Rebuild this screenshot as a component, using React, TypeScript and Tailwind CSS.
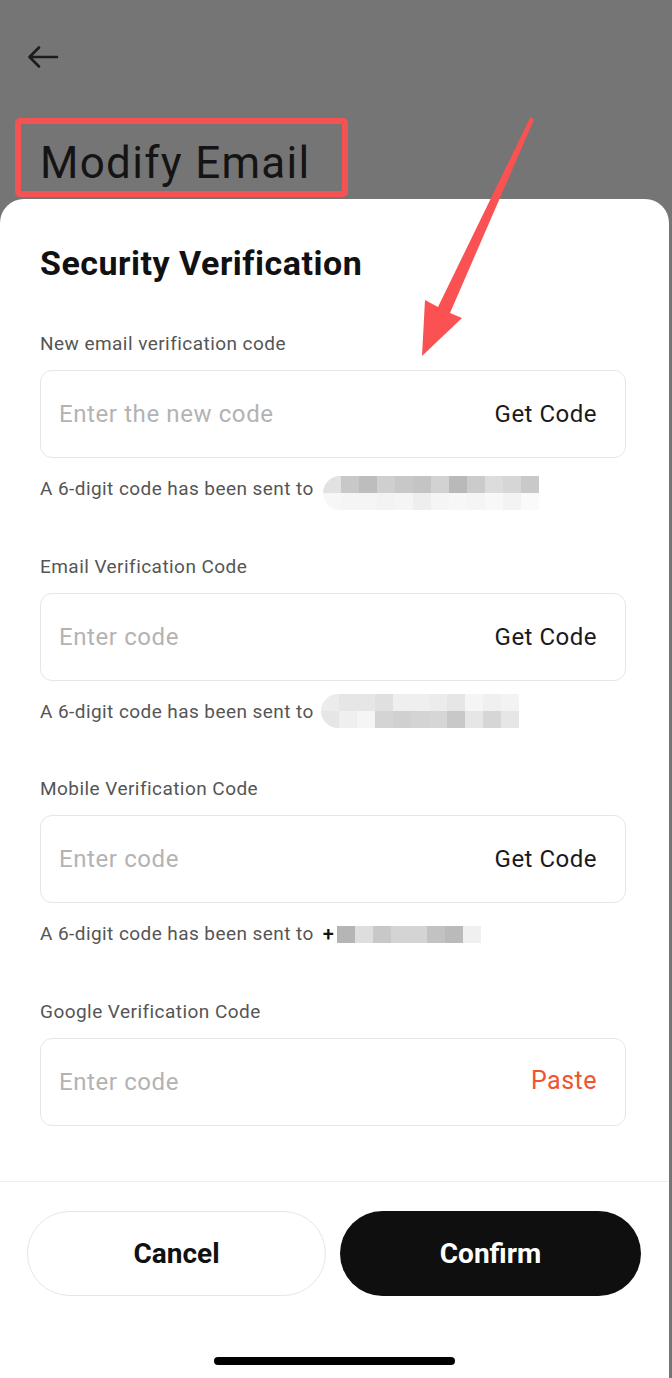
import React from 'react';

type Blur = { top: string[]; bottom?: string[] };

const blurs: Record<string, Blur> = {
  newEmail: {
    top: ['#e2e2e2', '#c8c8c8', '#bdbdbd', '#cfcfcf', '#c8c8c8', '#c4c4c4', '#d2d2d2', '#b9b9b9', '#cbcbcb', '#dcdcdc', '#d6d6d6', '#c9c9c9'],
    bottom: ['#f7f7f7', '#f5f5f5', '#f5f5f5', '#f3f3f3', '#f5f5f5', '#eeeeee', '#f5f5f5', '#f7f7f7', '#f5f5f5', '#f8f8f8', '#f3f3f3', '#fafafa'],
  },
  email: {
    top: ['#ececec', '#e6e6e6', '#e6e6e6', '#e0e0e0', '#efefef', '#efefef', '#ececec', '#e6e6e6', '#f5f5f5', '#f0f0f0', '#f3f3f3'],
    bottom: ['#e6e6e6', '#efefef', '#f5f5f5', '#d4d4d4', '#d0d0d0', '#d4d4d4', '#d6d6d6', '#c8c8c8', '#e6e6e6', '#d6d6d6', '#e6e6e6'],
  },
  mobile: {
    top: ['#b5b5b5', '#dedede', '#c8c8c8', '#d4d4d4', '#d4d4d4', '#c2c2c2', '#bababa', '#f0f0f0'],
  },
};

const Pixels: React.FC<{ b: Blur; round?: boolean }> = ({ b, round = true }) => (
  <div className={round ? 'flex flex-col overflow-hidden rounded-l-full' : 'flex flex-col'}>
    <div className="flex">
      {b.top.map((c, i) => (
        <div key={i} className="w-[18px] h-[17px]" style={{ background: c }} />
      ))}
    </div>
    {b.bottom && (
      <div className="flex">
        {b.bottom.map((c, i) => (
          <div key={i} className="w-[18px] h-[17px]" style={{ background: c }} />
        ))}
      </div>
    )}
  </div>
);

const Field: React.FC<{
  label: string;
  placeholder: string;
  action: string;
  paste?: boolean;
  blur?: Blur;
  blurOffset?: string;
  plus?: boolean;
}> = ({ label, placeholder, action, paste, blur, blurOffset, plus }) => (
  <div className="flex flex-col">
    <div className="text-[19px] leading-[22px] tracking-[0.45px] text-[#555555]">{label}</div>
    <div className="mt-[15px] h-[88px] rounded-[12px] border border-[#e6e6e6] flex items-center pl-[18px] pr-[28px]">
      <input
        className="flex-1 min-w-0 bg-transparent outline-none text-[24px] tracking-[0.6px] text-[#1a1a1a] placeholder:text-[#b3b3b3]"
        placeholder={placeholder}
      />
      <span
        className={
          paste
            ? 'text-[25px] tracking-[0.5px] text-[#f0532f] -mt-[3px]'
            : 'text-[24px] tracking-[0.5px] text-[#1a1a1a]'
        }
      >
        {action}
      </span>
    </div>
    {blur && (
      <div className="mt-5 flex items-start h-[22px] text-[19px] leading-[22px] tracking-[0.43px] text-[#555555]">
        <span>A 6-digit code has been sent to</span>
        {plus ? (
          <div className="ml-[9px] flex items-center mt-[-10px] h-[42px]">
            <span className="text-[#111] text-[20px] leading-[22px] font-medium mr-[3px]">+</span>
            <Pixels b={blur} round={false} />
          </div>
        ) : (
          <div className={blurOffset}>
            <Pixels b={blur} />
          </div>
        )}
      </div>
    )}
  </div>
);

export default function App() {
  return (
    <div className="relative w-[672px] h-[1378px] bg-[#757575] flex flex-col font-[Roboto,sans-serif] overflow-hidden">
      {/* header */}
      <div className="h-[199px] shrink-0 flex flex-col">
        <div className="ml-[27px] mt-[45px]">
          <svg width="32" height="24" viewBox="0 0 32 24" fill="none">
            <path d="M3 12 H30 M12 2.5 L2.5 12 L12 21.5" stroke="#1c1c1c" strokeWidth="2.6" strokeLinecap="round" strokeLinejoin="round" />
          </svg>
        </div>
        <div className="ml-[15px] mt-[49px] w-[333px] h-[79px] border-[6px] border-[#f55353] rounded-[5px] pl-[19px] pt-[15px]">
          <div className="text-[44px] leading-[48px] tracking-[1.3px] text-[#141414]">Modify Email</div>
        </div>
      </div>

      {/* sheet */}
      <div className="flex-1 w-[669px] bg-white rounded-t-[24px] flex flex-col">
        <div className="px-10 pt-[44px]">
          <h1 className="text-[34px] leading-[40px] tracking-[0.5px] font-bold text-[#111111]">Security Verification</h1>
          <div className="mt-[50px] flex flex-col gap-[55.7px] w-[586px]">
            <Field
              label="New email verification code"
              placeholder="Enter the new code"
              action="Get Code"
              blur={blurs.newEmail}
              blurOffset="ml-[9px] -mt-[2px]"
            />
            <Field
              label="Email Verification Code"
              placeholder="Enter code"
              action="Get Code"
              blur={blurs.email}
              blurOffset="ml-[7px] -mt-[7px]"
            />
            <Field label="Mobile Verification Code" placeholder="Enter code" action="Get Code" blur={blurs.mobile} plus />
            <Field label="Google Verification Code" placeholder="Enter code" action="Paste" paste />
          </div>
        </div>
        <div className="mt-[55px] border-t border-[#eeeeee]" />
        <div className="mt-[29px] px-[27px] flex gap-[14px]">
          <button className="w-[299px] h-[85px] rounded-full border-[1.5px] border-[#e6e6e6] bg-white text-[28px] font-bold text-[#111111]">
            Cancel
          </button>
          <button className="w-[301px] h-[85px] rounded-full bg-[#0f0f10] text-[28px] font-bold text-white">
            Confirm
          </button>
        </div>
        <div className="mt-[61px] mx-auto w-[241px] h-[8px] rounded-full bg-black" />
      </div>

      {/* annotation arrow */}
      <svg className="absolute inset-0 pointer-events-none" width="672" height="1378">
        <polygon points="530.5,117 534,119.5 450,313 462,318 422,356 425,300 438,307" fill="#fa5252" />
      </svg>
    </div>
  );
}
